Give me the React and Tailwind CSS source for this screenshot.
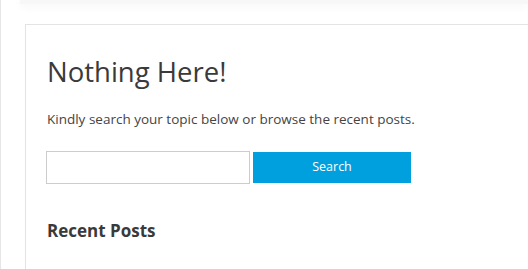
export default function App() {
  return (
    <div className="relative h-[269px] w-[528px] overflow-hidden bg-white font-['Open_Sans',sans-serif] text-[#404040]">
      <div className="absolute left-0 top-0 h-full w-px bg-[#e6e6e6]" />
      <div className="ml-[20px] h-[4px] bg-[#f7f7f7] shadow-[0_2px_10px_rgba(0,0,0,0.06)]" />
      <div className="ml-[25px] mt-[20px] h-[300px] border-l border-t border-[#e3e3e3] pl-[20px] pt-[30px]">
        <h1 className="pl-px text-[27.5px] leading-[34px] text-[#3a3a3a]">Nothing Here!</h1>
        <p className="mt-[21px] pl-px text-[13.5px] leading-[18px] text-[#444]">
          Kindly search your topic below or browse the recent posts.
        </p>
        <form className="mt-[23px] flex items-center gap-[3px]">
          <input className="h-[33px] w-[204px] border border-[#cccccc] bg-white px-2 outline-none" type="text" />
          <button type="button" className="h-[31px] w-[158px] bg-[#00a0df] text-[12.5px] text-white">
            Search
          </button>
        </form>
        <h2 className="mt-[35px] pl-px text-[17px] font-bold leading-[24px] text-[#3a3a3a]">Recent Posts</h2>
      </div>
    </div>
  );
}
